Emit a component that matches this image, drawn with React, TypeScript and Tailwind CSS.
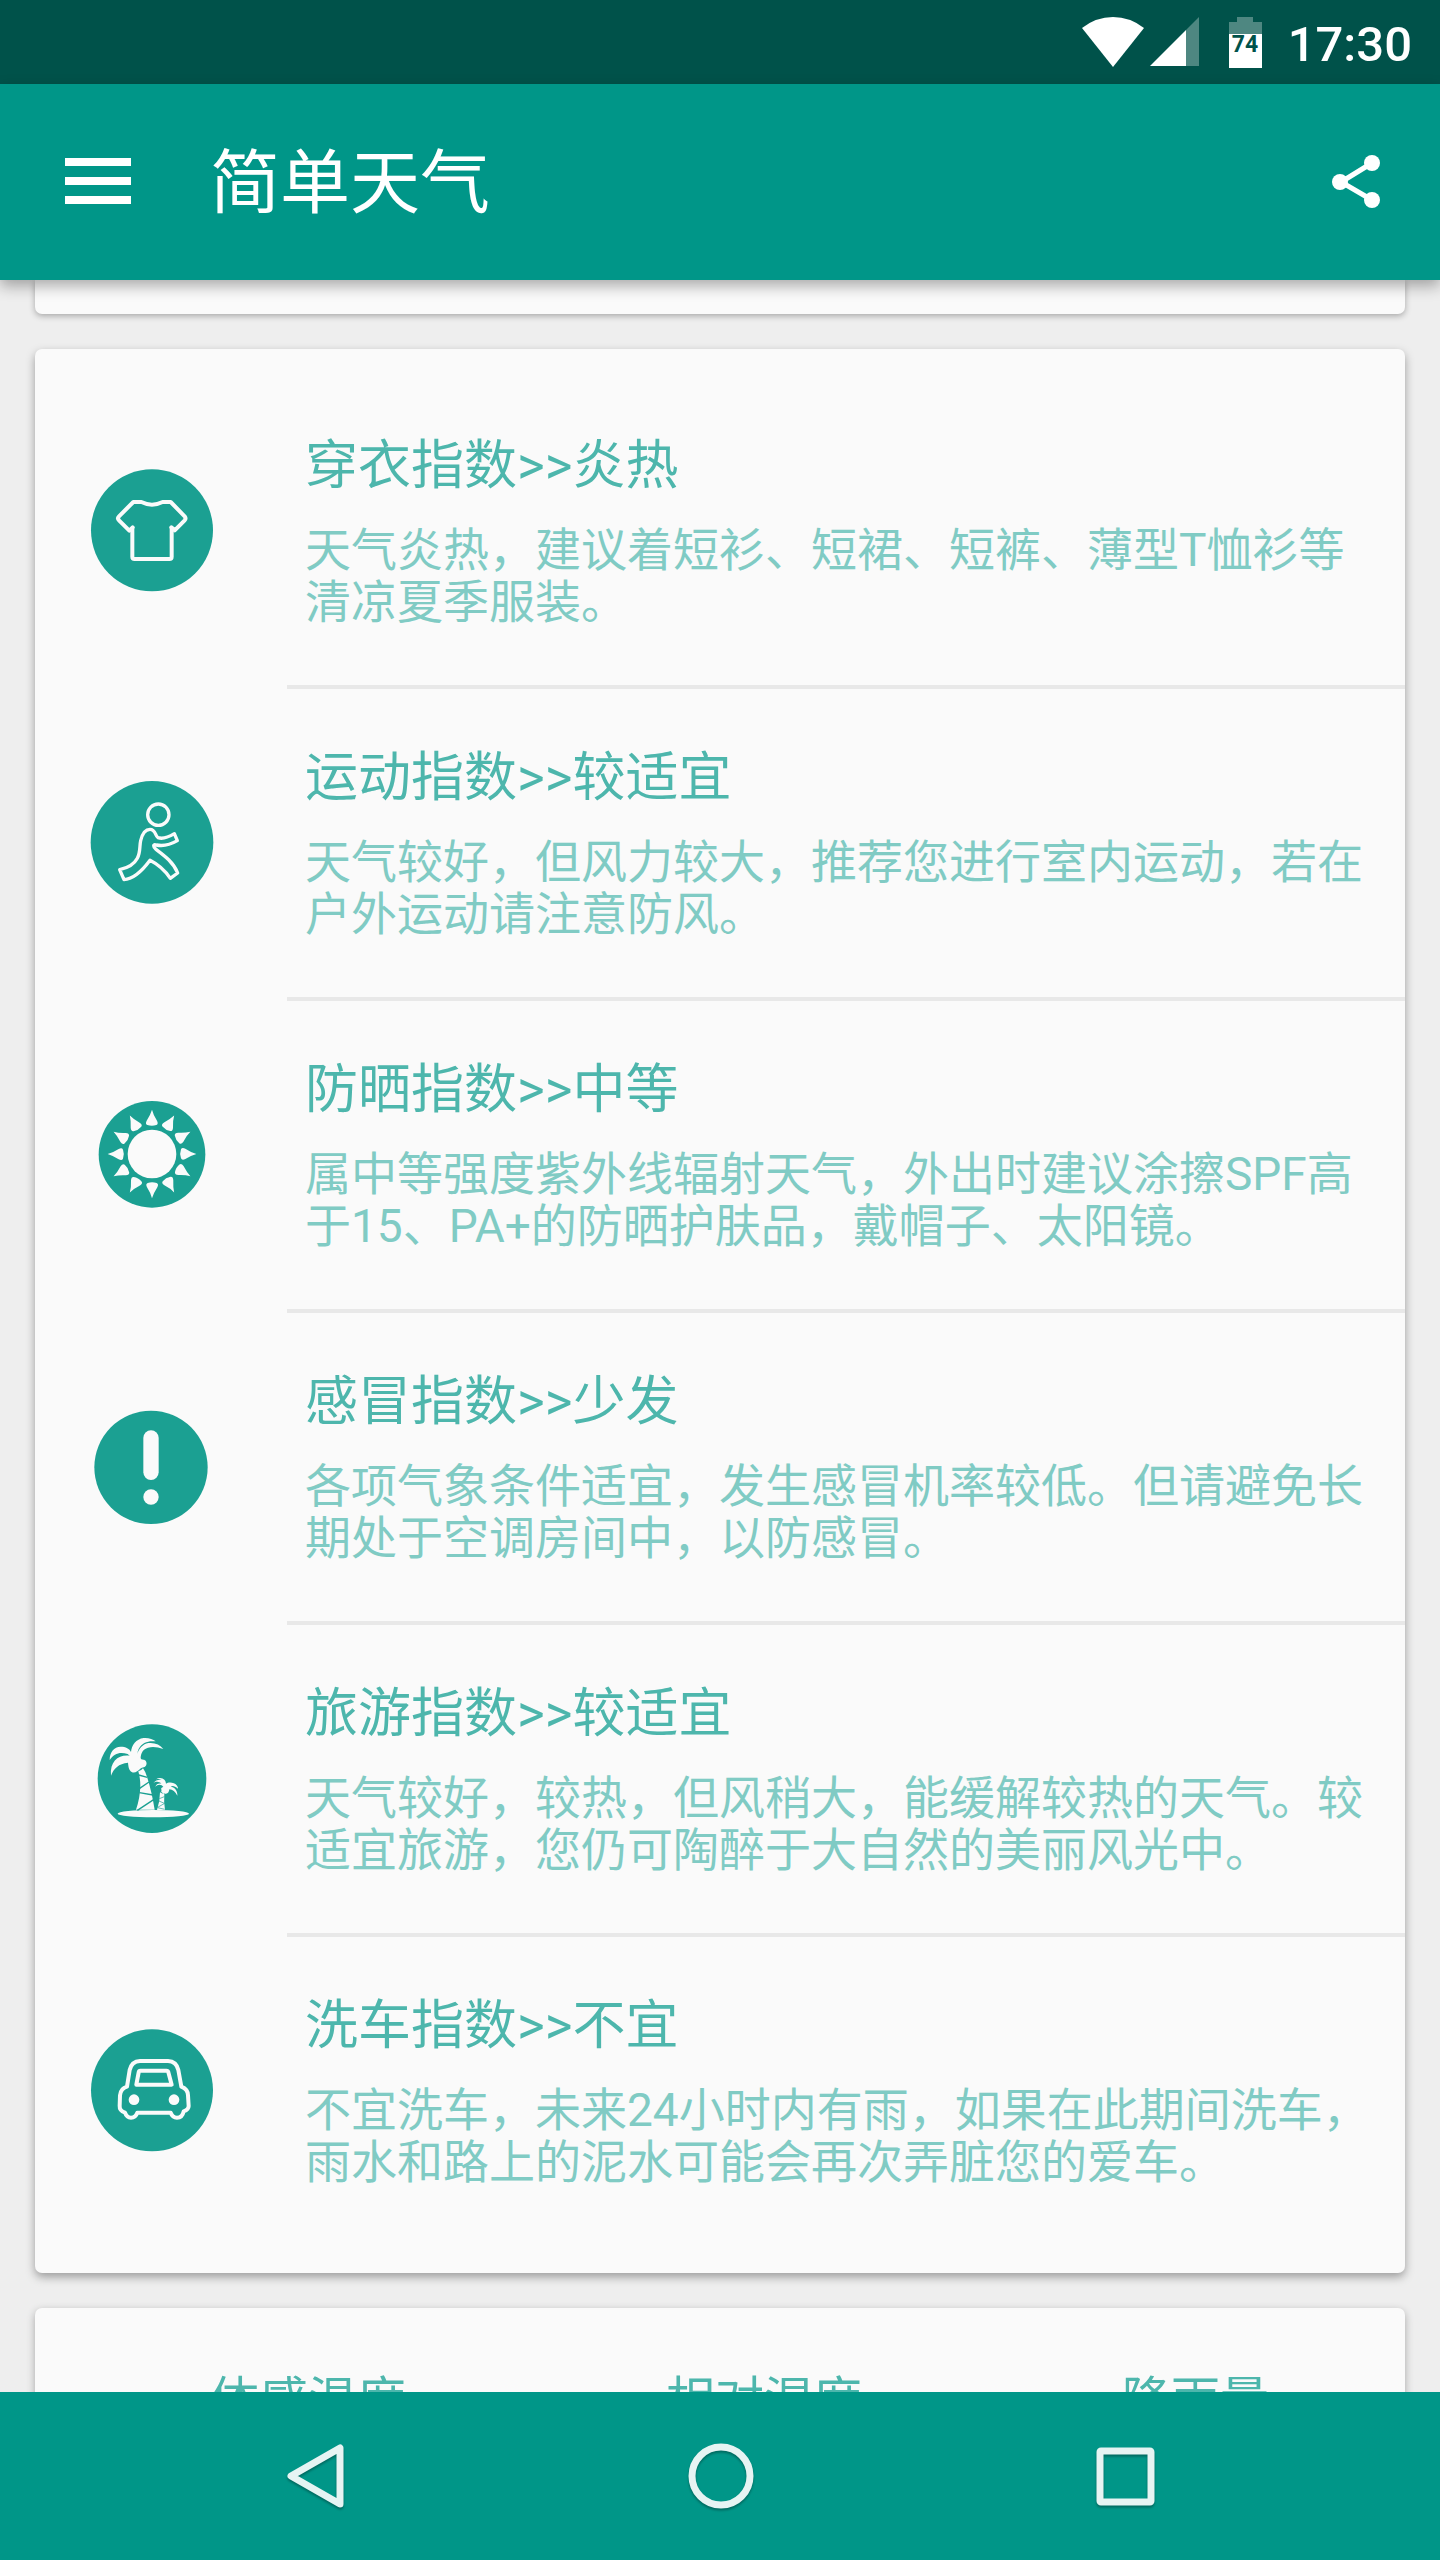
import type { ReactNode } from "react";

const TEAL = "#1ba092";
const PAPER = "#fafafa";

function ShirtIcon() {
  return (
    <svg viewBox="89 84 378 378" className="size-[126px]" aria-hidden="true">
      <circle cx="278" cy="271" r="183" fill={TEAL} />
      <g fill="none" stroke={PAPER} strokeWidth="12" strokeLinecap="round" strokeLinejoin="round">
        <path d="M219 262V350Q219 357 226 357H330Q337 357 337 350V262" strokeLinecap="butt" />
        <path d="M220 262L210 272L179 241Q173 235 179 229L222 186H246Q262 194 278 194Q294 194 310 186H334L376 229Q381 235 376 241L346 271L336 262" />
      </g>
    </svg>
  );
}

function RunnerIcon() {
  return (
    <svg viewBox="89 90 378 378" className="size-[126px]" aria-hidden="true">
      <circle cx="278" cy="277" r="184" fill={TEAL} />
      <g fill="none" stroke={PAPER} strokeWidth="10" strokeLinejoin="round">
        <circle cx="297" cy="194" r="32" />
        <path d="M181 359L194 389C224 388 252 358 272 331C292 341 315 359 333 385L355 369C342 336 314 316 290 298C281 291 280 281 291 285C315 290 335 283 354 272L345 251C325 263 310 268 296 263C287 257 289 238 272 238C257 238 248 255 244 272C240 289 244 306 234 325C223 346 206 354 181 359Z" />
      </g>
    </svg>
  );
}

const RAYS = [0, 30, 60, 90, 120, 150, 180, 210, 240, 270, 300, 330];

function SunIcon() {
  return (
    <svg viewBox="89 96 378 378" className="size-[126px]" aria-hidden="true">
      <circle cx="278" cy="283" r="160" fill={TEAL} />
      <circle cx="278" cy="282" r="73" fill={PAPER} />
      {RAYS.map((angle) => (
        <path
          key={angle}
          d="M278 149Q282 165 293 182Q298 192 291 195Q278 200 264 195Q257 192 262 182Q273 165 278 149Z"
          fill={PAPER}
          transform={`rotate(${angle} 278 282)`}
        />
      ))}
    </svg>
  );
}

function AlertIcon() {
  return (
    <svg viewBox="89 72 378 378" className="size-[126px]" aria-hidden="true">
      <circle cx="275" cy="262" r="170" fill={TEAL} />
      <rect x="252" y="151" width="46" height="149" rx="23" fill={PAPER} />
      <circle cx="275" cy="351" r="23" fill={PAPER} />
    </svg>
  );
}

function PalmIcon() {
  return (
    <svg viewBox="89 78 378 378" className="size-[126px]" aria-hidden="true">
      <circle cx="278" cy="266" r="163" fill={TEAL} />
      <g fill={PAPER}>
        <path d="M215 186C211 176 199 170 184 170C164 171 151 186 151 210C164 191 181 184 205 192L211 197C178 193 151 213 155 257C163 235 178 221 206 218C207 228 208 240 217 246C226 251 236 243 242 237C246 233 250 233 253 232C262 229 264 219 259 212C253 207 246 211 244 204C245 188 251 178 266 173C282 169 296 172 312 177C302 163 286 157 267 159C251 162 239 175 234 191C237 170 250 158 267 155C274 153 281 154 289 154C281 147 268 143 253 144C230 147 217 165 215 186Z" />
        <path d="M237 244Q245 243 251 235Q259 246 263 260Q277 304 286 359H230Q242 325 243 288Q243 265 237 244Z" />
        <ellipse cx="282" cy="371" rx="107" ry="11" />
        <path d="M306 281C300 275 290 273 282 280C288 271 298 268 307 270C302 266 296 266 290 268C303 259 319 266 320 281C327 275 345 276 352 286C355 290 356 293 356 296C346 287 339 286 334 290C346 292 355 301 354 317C348 305 340 299 330 298C329 306 326 311 320 311C317 312 315 308 311 309C306 308 304 304 307 300C303 297 307 292 312 291C307 283 295 282 288 291C290 282 298 279 306 281Z" />
        <path d="M302 307Q308 312 315 309Q313 336 317 360H293Q302 334 302 307Z" />
      </g>
      <g fill="none" stroke={TEAL} strokeWidth="4">
        <path d="M238 255L264 262M241 295L269 276M240 308L281 315M234 361L284 328" />
        <path d="M300 326L315 320M299 333L315 340M295 352L316 340M295 353L316 358" strokeWidth="2" />
      </g>
    </svg>
  );
}

function CarIcon() {
  return (
    <svg viewBox="89 84 378 378" className="size-[126px]" aria-hidden="true">
      <circle cx="278" cy="271" r="183" fill={TEAL} />
      <g fill="none" stroke={PAPER} strokeWidth="12" strokeLinejoin="round">
        <path d="M242 183H326Q351 184 357 210L366 260Q386 268 386 286L388 318Q388 329 373 334Q369 353 353 353Q339 353 334 338H234Q229 353 215 353Q202 353 197 338Q180 332 181 318L182 286Q184 265 203 260L211 210Q217 184 242 183Z" />
        <path d="M243 212H321Q326 212 327 217L337 254H231L238 217Q239 212 243 212Z" />
      </g>
      <circle cx="224" cy="299" r="16" fill={PAPER} />
      <circle cx="344" cy="299" r="16" fill={PAPER} />
    </svg>
  );
}

type IndexItem = { icon: ReactNode; title: string; text: string };

const ITEMS: IndexItem[] = [
  { icon: <ShirtIcon />, title: "穿衣指数>>炎热", text: "天气炎热，建议着短衫、短裙、短裤、薄型T恤衫等清凉夏季服装。" },
  { icon: <RunnerIcon />, title: "运动指数>>较适宜", text: "天气较好，但风力较大，推荐您进行室内运动，若在户外运动请注意防风。" },
  { icon: <SunIcon />, title: "防晒指数>>中等", text: "属中等强度紫外线辐射天气，外出时建议涂擦SPF高于15、PA+的防晒护肤品，戴帽子、太阳镜。" },
  { icon: <AlertIcon />, title: "感冒指数>>少发", text: "各项气象条件适宜，发生感冒机率较低。但请避免长期处于空调房间中，以防感冒。" },
  { icon: <PalmIcon />, title: "旅游指数>>较适宜", text: "天气较好，较热，但风稍大，能缓解较热的天气。较适宜旅游，您仍可陶醉于大自然的美丽风光中。" },
  { icon: <CarIcon />, title: "洗车指数>>不宜", text: "不宜洗车，未来24小时内有雨，如果在此期间洗车，雨水和路上的泥水可能会再次弄脏您的爱车。" },
];

function StatusBar() {
  return (
    <div className="flex h-[84px] shrink-0 items-center justify-end bg-[#00524a] pr-7 text-white">
      <svg viewBox="0 0 62 50" className="h-[50px] w-[62px]" aria-label="Wi-Fi">
        <path d="M31 50L0 11Q14 0 31 0Q48 0 62 11Z" fill="#fff" />
      </svg>
      <svg viewBox="0 0 50 50" className="ml-1.5 size-[50px]" aria-label="信号">
        <path d="M49 0V49H36V13Z" fill="#4e8781" />
        <path d="M36 13V49H0Z" fill="#fff" />
      </svg>
      <svg viewBox="0 0 33 51" className="ml-[29px] h-[51px] w-[33px]" aria-label="电量">
        <path d="M8 0H24V5H33V17H0V5H8Z" fill="#4e8781" />
        <rect y="17" width="33" height="34" fill="#fff" />
        <text x="16" y="35" textAnchor="middle" fontFamily="Roboto, sans-serif" fontSize="23" fontWeight="700" fill="#00524a">
          74
        </text>
      </svg>
      <time className="ml-[26px] pt-1 text-[49px] leading-none font-medium">17:30</time>
    </div>
  );
}

function AppBar() {
  return (
    <header className="relative z-10 flex h-[196px] shrink-0 items-center bg-[#009688] pr-[52px] pl-[65px] text-white shadow-[0_6px_14px_rgba(0,0,0,0.32)]">
      <button type="button" aria-label="菜单" className="flex flex-col gap-[11px] pb-[3px]">
        <span className="h-2 w-[66px] bg-white" />
        <span className="h-2 w-[66px] bg-white" />
        <span className="h-2 w-[66px] bg-white" />
      </button>
      <h1 className="ml-[79px] pt-1 text-[70px] leading-[84px] font-normal">简单天气</h1>
      <button type="button" aria-label="分享" className="ml-auto">
        <svg viewBox="0 0 56 54" className="h-[54px] w-14">
          <path d="M40 8L9 27L40 45" fill="none" stroke="#fff" strokeWidth="5" />
          <circle cx="8" cy="27" r="8" fill="#fff" />
          <circle cx="40" cy="8" r="8" fill="#fff" />
          <circle cx="40" cy="45" r="8" fill="#fff" />
        </svg>
      </button>
    </header>
  );
}

function IndexRow({ item, last }: { item: IndexItem; last: boolean }) {
  return (
    <li className="flex">
      <div className="flex h-[308px] w-[252px] shrink-0 items-center pl-[54px]">{item.icon}</div>
      <div className={last ? "flex-1" : "flex-1 border-b-4 border-[#e8e8e8]"}>
        <div className="flex h-[308px] flex-col justify-center pr-7 pl-[18px]">
          <h2 className="text-[53px] leading-[64px] font-normal text-[#4db6ac]">{item.title}</h2>
          <p className="mt-[26px] text-[46px] leading-[52px] text-[#80cbc4]">{item.text}</p>
        </div>
      </div>
    </li>
  );
}

function NavBar() {
  return (
    <nav aria-label="系统导航" className="relative z-10 flex h-[168px] shrink-0 bg-[#009688] px-28">
      <button type="button" aria-label="返回" className="flex flex-1 items-center justify-center">
        <svg viewBox="0 0 72 72" className="size-[72px] drop-shadow-[0_2px_1px_rgba(0,0,0,0.3)]">
          <path d="M61 8V64L12 36Z" fill="none" stroke="#e6f4f3" strokeWidth="7" strokeLinejoin="round" />
        </svg>
      </button>
      <button type="button" aria-label="主页" className="flex flex-1 items-center justify-center">
        <svg viewBox="0 0 72 72" className="size-[72px] drop-shadow-[0_2px_1px_rgba(0,0,0,0.3)]">
          <circle cx="37" cy="36" r="29" fill="none" stroke="#e6f4f3" strokeWidth="7" />
        </svg>
      </button>
      <button type="button" aria-label="最近任务" className="flex flex-1 items-center justify-center">
        <svg viewBox="0 0 72 72" className="size-[72px] drop-shadow-[0_2px_1px_rgba(0,0,0,0.3)]">
          <rect x="11" y="11" width="51" height="51" rx="1" fill="none" stroke="#e6f4f3" strokeWidth="7" strokeLinejoin="round" />
        </svg>
      </button>
    </nav>
  );
}

export default function App() {
  return (
    <div
      lang="zh-CN"
      className="flex h-screen flex-col overflow-hidden bg-[#eeeeee] font-['Roboto','Noto_Sans_CJK_SC',sans-serif]"
    >
      <StatusBar />
      <AppBar />
      <main className="flex min-h-0 flex-1 flex-col gap-[35px] overflow-hidden px-[35px]">
        <section className="h-[34px] shrink-0 rounded-b-[7px] bg-[#fafafa] shadow-[0_2px_6px_rgba(0,0,0,0.3)]" />
        <section className="shrink-0 rounded-[7px] bg-[#fafafa] py-7 shadow-[0_4px_10px_rgba(0,0,0,0.35)]">
          <ul>
            {ITEMS.map((item, i) => (
              <IndexRow key={item.title} item={item} last={i === ITEMS.length - 1} />
            ))}
          </ul>
        </section>
        <section className="shrink-0 rounded-[7px] bg-[#fafafa] pt-16 pb-16 shadow-[0_3px_8px_rgba(0,0,0,0.3)]">
          <div className="flex justify-between pr-[136px] pl-[175px] text-[49px] leading-[58px] text-[#4db6ac]">
            <span>体感温度</span>
            <span>相对湿度</span>
            <span>降雨量</span>
          </div>
        </section>
      </main>
      <NavBar />
    </div>
  );
}
